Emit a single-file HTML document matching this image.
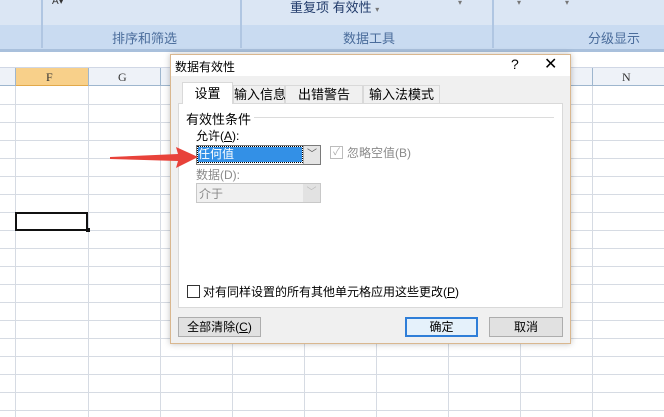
<!DOCTYPE html>
<html><head><meta charset="utf-8"><style>
*{margin:0;padding:0;box-sizing:border-box}
body{width:664px;height:417px;overflow:hidden;background:#fff;position:relative;font-family:"Liberation Sans","Noto Sans CJK SC",sans-serif;font-size:12px;color:#000}
.a{position:absolute}
.t{font-family:"Liberation Sans","Noto Sans CJK SC",sans-serif;white-space:nowrap}
</style></head><body>
<!-- ribbon -->
<div class="a" style="left:0;top:0;width:664px;height:52px;background:#dbe6f4;border-bottom:3px solid #a9c0dc"></div>
<div class="a" style="left:0;top:25px;width:664px;height:24px;background:#c9dbf1"></div>
<div class="a" style="left:41px;top:0;width:2px;height:48px;background:#b0c6e2"></div>
<div class="a" style="left:240px;top:0;width:2px;height:48px;background:#b0c6e2"></div>
<div class="a" style="left:492px;top:0;width:2px;height:48px;background:#b0c6e2"></div>
<div class="a t" style="left:112px;top:28px;color:#4a6c9b;font-size:13px">排序和筛选</div>
<div class="a t" style="left:343px;top:28px;color:#4a6c9b;font-size:13px">数据工具</div>
<div class="a t" style="left:588px;top:28px;color:#4a6c9b;font-size:13px">分级显示</div>
<div class="a t" style="left:290px;top:-3px;color:#203a6a;font-size:13px">重复项 有效性 <span style="font-size:8px;color:#777">▾</span></div>
<div class="a t" style="left:458px;top:-2px;color:#777;font-size:8px">▾</div>
<div class="a t" style="left:517px;top:-2px;color:#777;font-size:8px">▾</div>
<div class="a t" style="left:565px;top:-2px;color:#777;font-size:8px">▾</div>
<div class="a t" style="left:52px;top:-4px;color:#333;font-size:10px">A▾</div>
<div class="a" style="left:0;top:52px;width:664px;height:16px;background:#fff;border-bottom:1px solid #d0d7e5"></div>
<!-- grid header -->
<div class="a" style="left:0;top:68px;width:664px;height:18px;background:#eef2f8;border-bottom:1px solid #9eb6ce"></div>
<div class="a" style="left:15px;top:68px;width:73px;height:18px;background:#f8d08a;border-bottom:1px solid #e2a94a"></div>
<div class="a t" style="left:46px;top:70px;font-family:'Liberation Serif',serif;color:#333">F</div>
<div class="a t" style="left:118px;top:70px;font-family:'Liberation Serif',serif;color:#333">G</div>
<div class="a t" style="left:622px;top:70px;font-family:'Liberation Serif',serif;color:#333">N</div>
<svg class="a" style="left:0;top:68px" width="664" height="349">
<g stroke="#d6dbe3" stroke-width="1">
<line x1="15.5" y1="0" x2="15.5" y2="349"/><line x1="88.5" y1="0" x2="88.5" y2="349"/><line x1="160.5" y1="0" x2="160.5" y2="349"/>
<line x1="232.5" y1="0" x2="232.5" y2="349"/><line x1="304.5" y1="0" x2="304.5" y2="349"/><line x1="376.5" y1="0" x2="376.5" y2="349"/>
<line x1="448.5" y1="0" x2="448.5" y2="349"/><line x1="520.5" y1="0" x2="520.5" y2="349"/><line x1="592.5" y1="0" x2="592.5" y2="349"/>
<line x1="0" y1="36.5" x2="664" y2="36.5"/><line x1="0" y1="54.5" x2="664" y2="54.5"/><line x1="0" y1="72.5" x2="664" y2="72.5"/>
<line x1="0" y1="90.5" x2="664" y2="90.5"/><line x1="0" y1="108.5" x2="664" y2="108.5"/><line x1="0" y1="126.5" x2="664" y2="126.5"/>
<line x1="0" y1="144.5" x2="664" y2="144.5"/><line x1="0" y1="162.5" x2="664" y2="162.5"/><line x1="0" y1="180.5" x2="664" y2="180.5"/>
<line x1="0" y1="198.5" x2="664" y2="198.5"/><line x1="0" y1="216.5" x2="664" y2="216.5"/><line x1="0" y1="234.5" x2="664" y2="234.5"/>
<line x1="0" y1="252.5" x2="664" y2="252.5"/><line x1="0" y1="270.5" x2="664" y2="270.5"/><line x1="0" y1="288.5" x2="664" y2="288.5"/>
<line x1="0" y1="306.5" x2="664" y2="306.5"/><line x1="0" y1="324.5" x2="664" y2="324.5"/><line x1="0" y1="342.5" x2="664" y2="342.5"/>
</g>
<g stroke="#9eb6ce"><line x1="15.5" y1="0" x2="15.5" y2="18"/><line x1="88.5" y1="0" x2="88.5" y2="18"/><line x1="160.5" y1="0" x2="160.5" y2="18"/><line x1="592.5" y1="0" x2="592.5" y2="18"/></g>
<rect x="16" y="145" width="71" height="17" fill="none" stroke="#111" stroke-width="2"/>
<rect x="86" y="160" width="4" height="4" fill="#111"/>
</svg>
<!-- dialog -->
<div class="a" style="left:170px;top:54px;width:401px;height:290px;background:#f0f0f0;border:1px solid #d9b78f;box-shadow:0 0 6px rgba(0,0,0,.25)"></div>
<div class="a" style="left:171px;top:55px;width:399px;height:21px;background:#fff"></div>
<div class="a t" style="left:175px;top:58px;font-size:12px">数据有效性</div>
<div class="a t" style="left:511px;top:56px;font-size:14px">?</div>
<div class="a t" style="left:544px;top:54px;font-size:16px">✕</div>
<!-- tabs -->
<div class="a" style="left:178px;top:103px;width:385px;height:205px;background:#fff;border:1px solid #d9d9d9"></div>
<div class="a t" style="left:233px;top:85px;width:52px;height:19px;border:1px solid #d9d9d9;background:#f0f0f0;text-align:center;line-height:17px;font-size:13px">输入信息</div>
<div class="a t" style="left:285px;top:85px;width:78px;height:19px;border:1px solid #d9d9d9;background:#f0f0f0;text-align:center;line-height:17px;font-size:13px">出错警告</div>
<div class="a t" style="left:363px;top:85px;width:77px;height:19px;border:1px solid #d9d9d9;background:#f0f0f0;text-align:center;line-height:17px;font-size:13px">输入法模式</div>
<div class="a t" style="left:182px;top:82px;width:51px;height:22px;border:1px solid #d9d9d9;border-bottom:none;background:#fff;text-align:center;line-height:22px;font-size:13px">设置</div>
<div class="a t" style="left:186px;top:109px;font-size:13px">有效性条件</div>
<div class="a" style="left:254px;top:117px;width:300px;height:1px;background:#dcdcdc"></div>
<div class="a t" style="left:196px;top:127px;font-size:12px">允许(<u>A</u>):</div>
<div class="a" style="left:196px;top:145px;width:125px;height:20px;border:1px solid #7a7a7a;background:#fff"></div>
<div class="a t" style="left:198px;top:147px;width:104px;height:15px;background:#3390e6;color:#fff;line-height:15px;font-size:12px;outline:1px dotted #000">任何值</div>
<div class="a" style="left:303px;top:146px;width:17px;height:18px;background:#e5e5e5;border-left:1px solid #aaa;color:#555;font-size:10px;text-align:center;line-height:18px">﹀</div>
<div class="a" style="left:330px;top:146px;width:13px;height:13px;border:1px solid #bcbcbc;color:#aaa;font-size:10px;line-height:12px;text-align:center">✓</div>
<div class="a t" style="left:347px;top:144px;color:#8a8a8a;font-size:12px">忽略空值(B)</div>
<div class="a t" style="left:196px;top:166px;color:#8a8a8a;font-size:12px">数据(D):</div>
<div class="a" style="left:196px;top:183px;width:125px;height:20px;border:1px solid #c8c8c8;background:#f0f0f0"></div>
<div class="a t" style="left:199px;top:185px;color:#8a8a8a;font-size:12px">介于</div>
<div class="a" style="left:303px;top:184px;width:17px;height:18px;background:#e2e2e2;color:#bbb;font-size:10px;text-align:center;line-height:18px">﹀</div>
<div class="a" style="left:187px;top:285px;width:13px;height:13px;border:1px solid #333;background:#fff"></div>
<div class="a t" style="left:203px;top:283px;font-size:12px">对有同样设置的所有其他单元格应用这些更改(<u>P</u>)</div>
<!-- buttons -->
<div class="a t" style="left:178px;top:317px;width:83px;height:20px;border:1px solid #adadad;background:#e1e1e1;text-align:center;line-height:18px;font-size:12px">全部清除(<u>C</u>)</div>
<div class="a t" style="left:405px;top:317px;width:73px;height:20px;border:2px solid #2f7ed8;background:#e5f1fb;text-align:center;line-height:16px;font-size:12px">确定</div>
<div class="a t" style="left:489px;top:317px;width:74px;height:20px;border:1px solid #adadad;background:#e1e1e1;text-align:center;line-height:18px;font-size:12px">取消</div>
<!-- red arrow -->
<svg class="a" style="left:108px;top:145px" width="92" height="26">
<polygon points="2,12 70,9 68,2 90,12 68,23 70,16 2,14" fill="#e8423a"/>
</svg>
</body></html>
